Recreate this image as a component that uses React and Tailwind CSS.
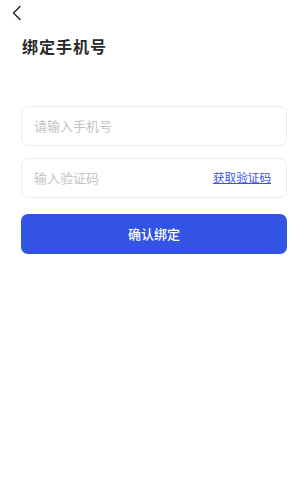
export default function App() {
  return (
    <div className="w-[308px] h-[488px] bg-white font-['Noto_Sans_CJK_SC',sans-serif] relative">
      {/* Back */}
      <div className="h-[26px] pl-[11px] pt-[5px]">
        <svg width="12" height="16" viewBox="0 0 12 16" fill="none">
          <path d="M9 1.5L2.5 8L9 14.5" stroke="#222" strokeWidth="1.4" strokeLinecap="round" strokeLinejoin="round" />
        </svg>
      </div>

      <h1 className="pl-[22px] mt-[9px] text-[16px] leading-[22px] font-bold tracking-[1px] text-[#2a2a2a]">绑定手机号</h1>

      <div className="px-[21px] mt-[49px] flex flex-col">
        <div className="h-[40px] border border-[#ececec] rounded-[7px] flex items-center px-[12px]">
          <span className="text-[13px] text-[#c4c4c4]">请输入手机号</span>
        </div>
        <div className="h-[40px] mt-[12px] border border-[#ececec] rounded-[7px] flex items-center justify-between pl-[12px] pr-[15px]">
          <span className="text-[13px] text-[#c4c4c4]">输入验证码</span>
          <span className="text-[11.6px] text-[#3a55e6] underline">获取验证码</span>
        </div>
        <button className="h-[40px] mt-[16px] rounded-[7px] bg-[#3253e4] text-white text-[13px] font-medium">确认绑定</button>
      </div>
    </div>
  );
}
